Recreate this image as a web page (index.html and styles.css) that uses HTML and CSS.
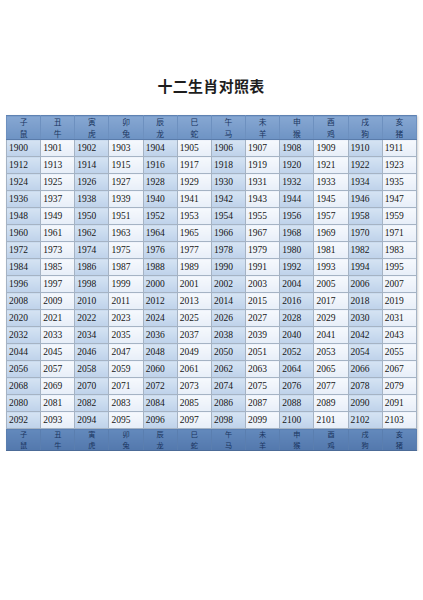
FILE: index.html
```html
<!DOCTYPE html>
<html lang="zh">
<head>
<meta charset="utf-8">
<title>十二生肖对照表</title>
<link rel="stylesheet" href="styles.css">
</head>
<body>
<div class="page">
<h1 class="title">十二生肖对照表</h1>
<table class="zodiac">
<thead>
<tr class="head"><th>子<br>鼠</th><th>丑<br>牛</th><th>寅<br>虎</th><th>卯<br>兔</th><th>辰<br>龙</th><th>巳<br>蛇</th><th>午<br>马</th><th>未<br>羊</th><th>申<br>猴</th><th>酉<br>鸡</th><th>戌<br>狗</th><th>亥<br>猪</th></tr>
</thead>
<tbody>
<tr><td>1900</td><td>1901</td><td>1902</td><td>1903</td><td>1904</td><td>1905</td><td>1906</td><td>1907</td><td>1908</td><td>1909</td><td>1910</td><td>1911</td></tr>
<tr><td>1912</td><td>1913</td><td>1914</td><td>1915</td><td>1916</td><td>1917</td><td>1918</td><td>1919</td><td>1920</td><td>1921</td><td>1922</td><td>1923</td></tr>
<tr><td>1924</td><td>1925</td><td>1926</td><td>1927</td><td>1928</td><td>1929</td><td>1930</td><td>1931</td><td>1932</td><td>1933</td><td>1934</td><td>1935</td></tr>
<tr><td>1936</td><td>1937</td><td>1938</td><td>1939</td><td>1940</td><td>1941</td><td>1942</td><td>1943</td><td>1944</td><td>1945</td><td>1946</td><td>1947</td></tr>
<tr><td>1948</td><td>1949</td><td>1950</td><td>1951</td><td>1952</td><td>1953</td><td>1954</td><td>1955</td><td>1956</td><td>1957</td><td>1958</td><td>1959</td></tr>
<tr><td>1960</td><td>1961</td><td>1962</td><td>1963</td><td>1964</td><td>1965</td><td>1966</td><td>1967</td><td>1968</td><td>1969</td><td>1970</td><td>1971</td></tr>
<tr><td>1972</td><td>1973</td><td>1974</td><td>1975</td><td>1976</td><td>1977</td><td>1978</td><td>1979</td><td>1980</td><td>1981</td><td>1982</td><td>1983</td></tr>
<tr><td>1984</td><td>1985</td><td>1986</td><td>1987</td><td>1988</td><td>1989</td><td>1990</td><td>1991</td><td>1992</td><td>1993</td><td>1994</td><td>1995</td></tr>
<tr><td>1996</td><td>1997</td><td>1998</td><td>1999</td><td>2000</td><td>2001</td><td>2002</td><td>2003</td><td>2004</td><td>2005</td><td>2006</td><td>2007</td></tr>
<tr><td>2008</td><td>2009</td><td>2010</td><td>2011</td><td>2012</td><td>2013</td><td>2014</td><td>2015</td><td>2016</td><td>2017</td><td>2018</td><td>2019</td></tr>
<tr><td>2020</td><td>2021</td><td>2022</td><td>2023</td><td>2024</td><td>2025</td><td>2026</td><td>2027</td><td>2028</td><td>2029</td><td>2030</td><td>2031</td></tr>
<tr><td>2032</td><td>2033</td><td>2034</td><td>2035</td><td>2036</td><td>2037</td><td>2038</td><td>2039</td><td>2040</td><td>2041</td><td>2042</td><td>2043</td></tr>
<tr><td>2044</td><td>2045</td><td>2046</td><td>2047</td><td>2048</td><td>2049</td><td>2050</td><td>2051</td><td>2052</td><td>2053</td><td>2054</td><td>2055</td></tr>
<tr><td>2056</td><td>2057</td><td>2058</td><td>2059</td><td>2060</td><td>2061</td><td>2062</td><td>2063</td><td>2064</td><td>2065</td><td>2066</td><td>2067</td></tr>
<tr><td>2068</td><td>2069</td><td>2070</td><td>2071</td><td>2072</td><td>2073</td><td>2074</td><td>2075</td><td>2076</td><td>2077</td><td>2078</td><td>2079</td></tr>
<tr><td>2080</td><td>2081</td><td>2082</td><td>2083</td><td>2084</td><td>2085</td><td>2086</td><td>2087</td><td>2088</td><td>2089</td><td>2090</td><td>2091</td></tr>
<tr><td>2092</td><td>2093</td><td>2094</td><td>2095</td><td>2096</td><td>2097</td><td>2098</td><td>2099</td><td>2100</td><td>2101</td><td>2102</td><td>2103</td></tr>
</tbody>
<tfoot>
<tr class="foot"><th>子<br>鼠</th><th>丑<br>牛</th><th>寅<br>虎</th><th>卯<br>兔</th><th>辰<br>龙</th><th>巳<br>蛇</th><th>午<br>马</th><th>未<br>羊</th><th>申<br>猴</th><th>酉<br>鸡</th><th>戌<br>狗</th><th>亥<br>猪</th></tr>
</tfoot>
</table>
</div>
</body>
</html>
```
FILE: styles.css
```css
html, body {
  margin: 0;
  padding: 0;
  background: #ffffff;
}
.page {
  padding: 76px 0 0 6px;
}
.title {
  margin: 0;
  width: 410px;
  text-align: center;
  font-family: "Noto Sans CJK SC", sans-serif;
  font-weight: 700;
  font-size: 15px;
  line-height: 20px;
  color: #1e1e1e;
  letter-spacing: 0.3px;
}
.zodiac {
  margin-top: 19px;
  width: 411px;
  table-layout: fixed;
  border-collapse: collapse;
  box-shadow: 1px 1px 2px rgba(0, 0, 0, 0.18);
}
.zodiac th {
  font-family: "Noto Sans CJK SC", sans-serif;
  font-weight: 400;
  color: #1a3560;
  text-align: center;
  padding: 0;
  border-left: 1px solid #6d90bf;
  border-right: 1px solid #6d90bf;
}
.head th {
  height: 23px;
  font-size: 7.8px;
  line-height: 11.4px;
  background: linear-gradient(#86a7d2, #6e93c4);
  border-top: 1px solid #5f82b2;
  border-bottom: 1px solid #5a7cab;
}
.foot th {
  height: 21px;
  font-size: 7.2px;
  line-height: 10.5px;
  background: linear-gradient(#6389bc, #5378ad);
  border-top: 1px solid #52739f;
  border-bottom: 1px solid #4c6b97;
  border-left-color: #5a7eaf;
  border-right-color: #5a7eaf;
}
.zodiac td {
  height: 16px;
  padding: 0 0 0 2px;
  font-family: "Liberation Serif", serif;
  font-size: 9.5px;
  line-height: 16px;
  color: #161616;
  border: 1px solid #a5b3c4;
  background: linear-gradient(#f6f9fd, #e7eef8);
}
.zodiac td:nth-child(odd) {
  background: linear-gradient(#d5e3f3, #bed2ea);
}
```
